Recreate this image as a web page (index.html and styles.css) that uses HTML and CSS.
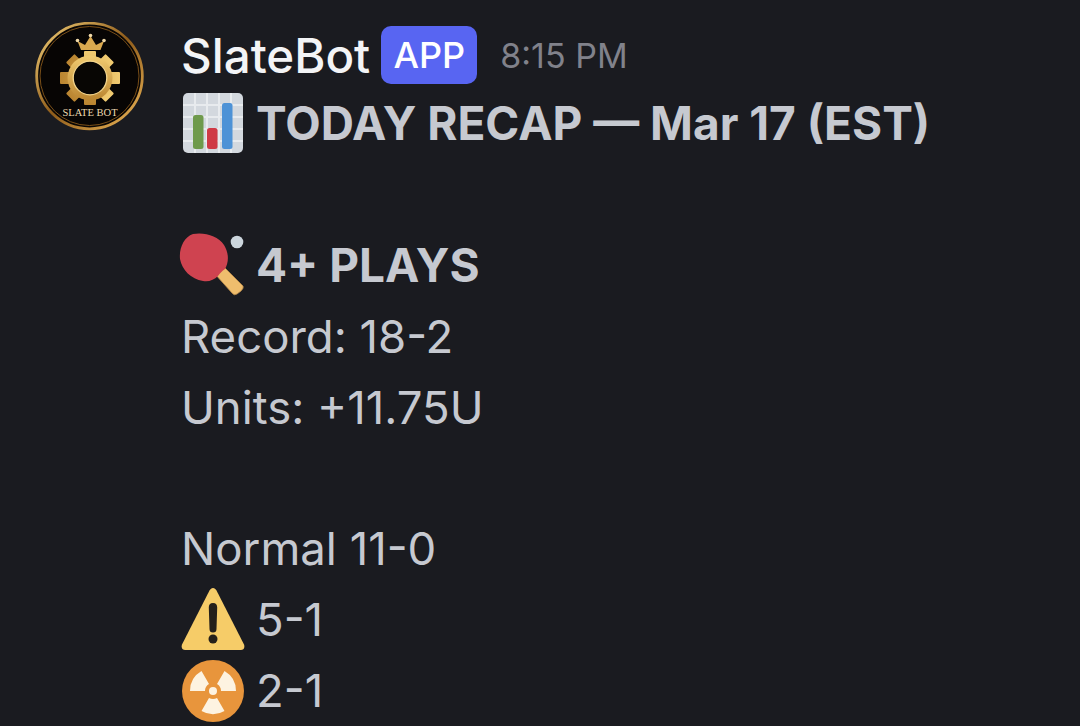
FILE: index.html
```html
<!DOCTYPE html>
<html lang="en">
<head>
<meta charset="utf-8">
<title>SlateBot</title>
<link rel="stylesheet" href="styles.css">
</head>
<body>
<main class="message">
  <svg class="avatar" viewBox="0 0 110 110" aria-label="SlateBot avatar">
    <defs>
      <linearGradient id="gold" x1="0" y1="0" x2="1" y2="1">
        <stop offset="0" stop-color="#f6d27a"/>
        <stop offset=".5" stop-color="#8f5c1a"/>
        <stop offset="1" stop-color="#f0b95a"/>
      </linearGradient>
      <linearGradient id="gear" x1="0" y1="0" x2="0" y2="1">
        <stop offset="0" stop-color="#f2cc72"/>
        <stop offset="1" stop-color="#b98430"/>
      </linearGradient>
    </defs>
    <circle cx="54.500" cy="54" r="52.800" fill="#070504" stroke="url(#gold)" stroke-width="2.800"/>
    <circle cx="54.500" cy="54" r="49.500" fill="none" stroke="#7a4f18" stroke-width="1"/>
    <g fill="url(#gear)">
      <rect x="49" y="29" width="12" height="54" rx="1"/>
      <rect x="49" y="28" width="12" height="56" rx="1" transform="rotate(45 55 56)"/>
      <rect x="49" y="26" width="12" height="60" rx="1" transform="rotate(90 55 56)"/>
      <rect x="49" y="28" width="12" height="56" rx="1" transform="rotate(135 55 56)"/>
      <circle cx="55" cy="56" r="22.500"/>
    </g>
    <circle cx="55" cy="56" r="16.800" fill="#080604" stroke="#f3d48b" stroke-width="1.300"/>
    <path d="M46 28 42.500 19 50 23 55.500 14 61 23 69 19 65.500 28z" fill="#d9a94f"/>
    <circle cx="42.500" cy="18.500" r="1.800" fill="#f0d9a8"/>
    <circle cx="55.500" cy="13.500" r="1.800" fill="#f0d9a8"/>
    <circle cx="69" cy="18.500" r="1.800" fill="#f0d9a8"/>
    <text class="avatar-text" x="55" y="94" text-anchor="middle">SLATE BOT</text>
  </svg>
  <div class="body">
    <header class="head">
      <span class="name">SlateBot</span>
      <span class="badge">APP</span>
      <time class="time">8:15 PM</time>
    </header>
    <p class="line strong">
      <svg class="emoji" viewBox="0 0 64 64" aria-hidden="true">
        <rect x="2" y="2" width="60" height="60" rx="5" fill="#d3d8de"/>
        <path d="M2 14h60M2 26h60M2 38h60M2 50h60M14 2v60M26 2v60M38 2v60M50 2v60" stroke="#e8ebee" stroke-width="2"/>
        <rect x="12" y="24" width="10.500" height="34" rx="2.500" fill="#6f9a4c"/>
        <rect x="26" y="37" width="10.500" height="21" rx="2.500" fill="#cf3a46"/>
        <rect x="41" y="12" width="10.500" height="46" rx="2.500" fill="#4d92d6"/>
      </svg>
      <span>TODAY RECAP — Mar 17 (EST)</span>
    </p>
    <p class="line blank">&nbsp;</p>
    <p class="line strong">
      <svg class="emoji" viewBox="0 0 64 64" aria-hidden="true">
        <path d="M34 41l8-8 20 20q1 2-2 5l-4 3q-3 2-5-1z" fill="#efbd6d" stroke="#b98a4a" stroke-width=".8"/>
        <path d="M12 1C24-1 37 3 43 12c5 8 5 17 1 24-3 2-5 4-7 7-4 4-9 6-15 5C10 46 1 37-1 26-2 15 3 4 12 1z" fill="#cf4350"/>
        <circle cx="56" cy="9" r="6.300" fill="#ccd6dd"/>
      </svg>
      <span>4+ PLAYS</span>
    </p>
    <p class="line">Record: 18-2</p>
    <p class="line">Units: +11.75U</p>
    <p class="line blank">&nbsp;</p>
    <p class="line">Normal 11-0</p>
    <p class="line">
      <svg class="emoji" viewBox="0 0 64 64" aria-hidden="true">
        <path d="M32 0c1.500 0 2.500 1 3.500 2.500l27.500 54c1 2.500 0 5.500-3 5.500H4c-3 0-4-3-3-5.500l27.500-54C29.500 1 30.500 0 32 0z" fill="#f6cc68"/>
        <path d="M32 15c3 0 4.300 2 4.200 4.500L35.500 41a3.500 3.500 0 0 1-7 0L27.800 19.500C27.700 17 29 15 32 15z" fill="#25201a"/>
        <circle cx="32" cy="51" r="4.500" fill="#25201a"/>
      </svg>
      <span>5-1</span>
    </p>
    <p class="line">
      <svg class="emoji" viewBox="0 0 64 64" aria-hidden="true">
        <circle cx="32" cy="32" r="31" fill="#e8953c"/>
        <circle cx="32" cy="32" r="4" fill="#fdf3e1"/>
        <path d="M9 32A23 23 0 0 1 20.500 12.080L28 25.070A8 8 0 0 0 24 32zM43.500 12.080A23 23 0 0 1 55 32H40A8 8 0 0 0 36 25.070zM43.500 51.920A23 23 0 0 1 20.500 51.920L28 38.930A8 8 0 0 0 36 38.930z" fill="#fdf3e1"/>
      </svg>
      <span>2-1</span>
    </p>
  </div>
</main>
</body>
</html>
```
FILE: styles.css
```css
* {
  box-sizing: border-box;
}

html,
body {
  margin: 0;
  height: 100%;
  overflow: hidden;
}

body {
  background: #1a1b20;
  color: #c6c9d0;
  font-family: Inter, "Noto Sans", sans-serif;
}

.message {
  display: flex;
  gap: 36px;
  padding: 22px 0 0 35px;
}

.avatar {
  flex: none;
  width: 110px;
  height: 110px;
}

.avatar-text {
  fill: #ecd9ae;
  font-family: "Liberation Serif", serif;
  font-size: 10.500px;
}

.body {
  flex: 1;
  min-width: 0;
}

.head {
  display: flex;
  align-items: center;
  height: 66px;
}

.name {
  color: #f3f4f6;
  font-size: 47.500px;
  font-weight: 500;
}

.badge {
  display: flex;
  align-items: center;
  justify-content: center;
  width: 96px;
  height: 58px;
  margin-left: 11px;
  border-radius: 10px;
  background: #5865f2;
  color: #fff;
  font-size: 36px;
  font-weight: 500;
}

.time {
  margin-left: 23px;
  color: #81828b;
  font-size: 34px;
}

.line {
  display: flex;
  align-items: center;
  gap: 11px;
  height: 70.900px;
  margin: 0;
  font-size: 45.500px;
  white-space: nowrap;
}

.strong {
  font-size: 46px;
  font-weight: 700;
}

.emoji {
  flex: none;
  width: 64px;
  height: 64px;
  overflow: visible;
}
```
